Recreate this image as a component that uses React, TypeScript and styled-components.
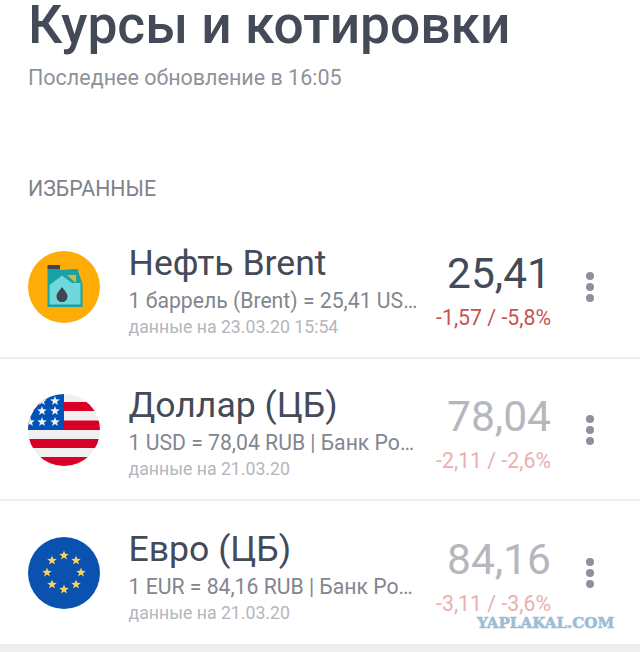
import styled, { createGlobalStyle } from "styled-components";

const GlobalStyle = createGlobalStyle`
    html, body {
        margin: 0;
        padding: 0;
        background: #fff;
    }
    body {
        font-family: Roboto, "Noto Sans", sans-serif;
    }
`

const Page = styled.div`
    position: relative;
    width: 640px;
    height: 652px;
    overflow: hidden;
    background: #fff;
`

const Header = styled.header`
    display: flow-root;
    padding: 0 28px;
    height: 170px;
`

const Title = styled.h1`
    margin: -10px 0 0;
    font-size: 53.3px;
    line-height: 70px;
    font-weight: 500;
    color: #444a58;
    white-space: nowrap;
`

const Updated = styled.div`
    margin-top: 5px;
    font-size: 21.5px;
    line-height: 26px;
    color: #8f929b;
`

const Section = styled.div`
    padding: 0 28px;
    height: 46px;
    font-size: 21.3px;
    line-height: 38px;
    color: #7f828c;
`

const Row = styled.div<{ $last?: boolean }>`
    display: flex;
    align-items: center;
    box-sizing: border-box;
    height: 142.5px;
    padding: 0 0 0 28px;
    border-bottom: ${(p) => (p.$last ? "none" : "2px solid #eeeef0")};
`

const Logo = styled.div`
    flex: none;
    width: 72px;
    height: 72px;
    margin: 2px 28.500px 0 0;
    border-radius: 50%;
    overflow: hidden;

    svg {
        display: block;
    }
`

const Info = styled.div`
    flex: none;
    width: 291.500px;
    min-width: 0;
    margin-top: 8px;
`

const Name = styled.div`
    font-size: 35.6px;
    line-height: 42px;
    color: #444a58;
    white-space: nowrap;
`

const Description = styled.div`
    margin-top: 4px;
    font-size: 21.2px;
    line-height: 26px;
    color: #83868f;
    white-space: nowrap;
    overflow: hidden;
    text-overflow: ellipsis;
`

const DateLine = styled.div`
    margin-top: 1px;
    font-size: 17.7px;
    line-height: 24px;
    color: #b4b6bc;
    white-space: nowrap;
`

const Quote = styled.div`
    flex: none;
    width: 131px;
    margin-top: 8px;
    text-align: right;
`

const Price = styled.div<{ $stale?: boolean }>`
    font-size: 42.5px;
    line-height: 50px;
    color: ${(p) => (p.$stale ? "#b5b7bd" : "#444a58")};
`

const Change = styled.div<{ $stale?: boolean }>`
    margin-top: 6px;
    font-size: 21.3px;
    line-height: 26px;
    color: ${(p) => (p.$stale ? "#eab0ae" : "#c9524f")};
    white-space: nowrap;
`

const Menu = styled.div`
    flex: none;
    display: flex;
    flex-direction: column;
    gap: 3px;
    margin: 2px 0 0 35px;

    span {
        width: 8px;
        height: 8px;
        border-radius: 50%;
        background: #8e909e;
    }
`

const BottomBar = styled.div`
    height: 9px;
    background: #eeeeee;
`

const Watermark = styled.div`
    position: absolute;
    left: 477px;
    top: 614px;
    font-family: "DejaVu Serif", serif;
    font-weight: 900;
    font-size: 15.1px;
    line-height: 18px;
    color: #9dbdd5;
    -webkit-text-stroke: 0.6px #9dbdd5;
    white-space: nowrap;
`

function star(cx: number, cy: number, r: number) {
    const pts: string[] = [];
    for (let i = 0; i < 10; i++) {
        const rad = i % 2 === 0 ? r : r * 0.42;
        const a = (Math.PI / 5) * i - Math.PI / 2;
        pts.push(`${(cx + rad * Math.cos(a)).toFixed(2)},${(cy + rad * Math.sin(a)).toFixed(2)}`);
    }
    return pts.join(" ");
}

function OilIcon() {
    return (
        <svg width="72" height="72" viewBox="0 0 72 72">
            <rect width="72" height="72" fill="#fdac08" />
            <rect x="19.500" y="14" width="12.500" height="4.500" fill="#3f4553" />
            <path d="M19.500 18.500h12.500v.5l17.500-1 5 15v23h-35z" fill="#19a2a4" />
            <path d="M39 24h9v8z" fill="#e5b62c" />
            <path d="M34 24.500L44 32h8.500v21.500h-31V34z" fill="#6fd8dc" />
            <path d="M34 36c3 4 5.500 6.500 5.500 9.500a5.500 5.500 0 0 1-11 0c0-3 2.500-5.500 5.500-9.500z" fill="#3f4553" />
        </svg>
    )
}

function UsFlag() {
    const starsAt = [
        [14, 7], [27, 7], [1, 17], [14, 17], [27, 17], [2, 28], [14, 28], [27, 28],
    ];
    return (
        <svg width="72" height="72" viewBox="0 0 72 72">
            <rect width="72" height="72" fill="#f0f0f0" />
            <rect y="8" width="72" height="9" fill="#d80027" />
            <rect y="26.500" width="72" height="9.500" fill="#d80027" />
            <rect y="45" width="72" height="9" fill="#d80027" />
            <rect y="63" width="72" height="9" fill="#d80027" />
            <rect width="36" height="36" fill="#0052b4" />
            {starsAt.map(([x, y]) => (
                <polygon key={`${x}-${y}`} points={star(x, y, 5)} fill="#f0f0f0" />
            ))}
        </svg>
    )
}

function EuFlag() {
    const stars = Array.from({ length: 8 }, (_, i) => {
        const a = (Math.PI / 4) * i - Math.PI / 2;
        return star(36 + 17 * Math.cos(a), 35.500 + 17 * Math.sin(a), 5);
    });
    return (
        <svg width="72" height="72" viewBox="0 0 72 72">
            <rect width="72" height="72" fill="#0b52b0" />
            {stars.map((points) => (
                <polygon key={points} points={points} fill="#f8d45c" />
            ))}
        </svg>
    )
}

const quotes = [
    {
        logo: <OilIcon />,
        name: "Нефть Brent",
        description: "1 баррель (Brent) = 25,41 USD | ICE",
        date: "данные на 23.03.20 15:54",
        price: "25,41",
        change: "-1,57 / -5,8%",
        stale: false,
    },
    {
        logo: <UsFlag />,
        name: "Доллар (ЦБ)",
        description: "1 USD = 78,04 RUB | Банк России",
        date: "данные на 21.03.20",
        price: "78,04",
        change: "-2,11 / -2,6%",
        stale: true,
    },
    {
        logo: <EuFlag />,
        name: "Евро (ЦБ)",
        description: "1 EUR = 84,16 RUB | Банк России",
        date: "данные на 21.03.20",
        price: "84,16",
        change: "-3,11 / -3,6%",
        stale: true,
    },
];

function App() {
    return (
        <Page>
            <GlobalStyle />
            <Header>
                <Title>Курсы и котировки</Title>
                <Updated>Последнее обновление в 16:05</Updated>
            </Header>
            <Section>ИЗБРАННЫЕ</Section>
            {quotes.map((q, i) => (
                <Row key={q.name} $last={i === quotes.length - 1}>
                    <Logo>{q.logo}</Logo>
                    <Info>
                        <Name>{q.name}</Name>
                        <Description>{q.description}</Description>
                        <DateLine>{q.date}</DateLine>
                    </Info>
                    <Quote>
                        <Price $stale={q.stale}>{q.price}</Price>
                        <Change $stale={q.stale}>{q.change}</Change>
                    </Quote>
                    <Menu>
                        <span />
                        <span />
                        <span />
                    </Menu>
                </Row>
            ))}
            <BottomBar />
            <Watermark>YAPLAKAL.COM</Watermark>
        </Page>
    )
}

export default App
